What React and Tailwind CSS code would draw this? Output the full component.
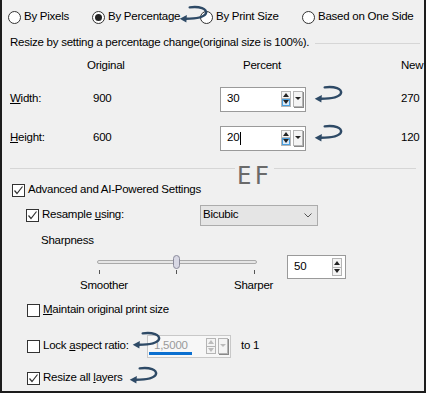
import React from "react";

const font = { fontFamily: '"Liberation Sans", Arial, sans-serif' };

const Arrow = ({ className }) => (
  <svg className={className} viewBox="0 0 30 20" width="29" height="19">
    <path d="M11 2.5 C21 1 30 4 28 9 C26 13 17 14.5 7 14.5" fill="none" stroke="#2e4a66" strokeWidth="2.6" strokeLinecap="round" />
    <path d="M0.5 14.5 L8 10.5 L7.5 18.5 Z" fill="#2e4a66" />
  </svg>
);

const Radio = ({ checked, label, className }) => (
  <div className={"flex items-center gap-[3px] " + (className || "")}>
    <span className="w-[13px] h-[13px] rounded-full border border-[#333] bg-white flex items-center justify-center">
      {checked && <span className="w-[7px] h-[7px] rounded-full bg-[#222]" />}
    </span>
    <span>{label}</span>
  </div>
);

const Check = ({ checked }) => (
  <span className="w-[13px] h-[13px] border border-[#333] bg-white flex items-center justify-center shrink-0">
    {checked && (
      <svg width="11" height="11" viewBox="0 0 11 11">
        <path d="M1.5 5.5 L4 8.5 L9.5 1.5" fill="none" stroke="#333" strokeWidth="1.2" />
      </svg>
    )}
  </span>
);

const SpinPair = ({ disabled, tall }) => (
  <div className={"flex flex-col w-[10px] border border-[#b5b5b5] bg-[#f4f4f4] " + (tall ? "h-[18px]" : "h-[16px]")}>
    <div className="flex-1 flex items-center justify-center border-b border-[#b5b5b5]">
      <span className={"w-0 h-0 border-l-[3px] border-r-[3px] border-b-[4px] border-l-transparent border-r-transparent " + (disabled ? "border-b-[#bbb]" : "border-b-[#222]")} />
    </div>
    <div className={"flex-1 flex items-center justify-center " + (disabled || tall ? "" : "bg-[#dbeaf8] border border-[#4aa0e0]")}>
      <span className={"w-0 h-0 border-l-[3px] border-r-[3px] border-t-[4px] border-l-transparent border-r-transparent " + (disabled ? "border-t-[#bbb]" : "border-t-[#222]")} />
    </div>
  </div>
);

const DropBtn = ({ disabled }) => (
  <div className="w-[10px] h-[16px] border border-[#b5b5b5] bg-[#f4f4f4] shadow-[1px_1px_0_#888] flex items-start justify-center pt-[5px] ml-[2px]">
    <span className={"w-0 h-0 border-l-[3px] border-r-[3px] border-t-[3px] border-l-transparent border-r-transparent " + (disabled ? "border-t-[#bbb]" : "border-t-[#222]")} />
  </div>
);

const NumBox = ({ value, caret }) => (
  <div className="w-[86px] h-[25px] border border-[#9a9a9a] bg-white flex items-center pl-[6px] pr-[2px]">
    <span className="flex-1 flex items-center">
      {value}
      {caret && <span className="w-[1px] h-[13px] bg-black ml-[1px]" />}
    </span>
    <SpinPair />
    <DropBtn />
  </div>
);

export default function App() {
  return (
    <div style={font} className="relative w-[426px] h-[393px] bg-[#f0f0f0] border-l-[2px] border-r-[2px] border-b-[2px] border-[#1c1c1c] text-[11.5px] tracking-[-0.25px] text-black overflow-hidden leading-none">
      {/* mode radios */}
      <div className="h-[34px] flex items-center">
        <Radio label="By Pixels" className="ml-[6px] w-[84px]" />
        <Radio checked label="By Percentage" className="w-[108px]" />
        <Radio label="By Print Size" className="w-[102px]" />
        <Radio label="Based on One Side" />
      </div>
      <Arrow className="absolute left-[177px] top-[5px]" />

      <div className="h-[18px] flex items-center pl-[8px] pr-[4px] gap-[6px]">
        <span className="whitespace-nowrap">Resize by setting a percentage change(original size is 100%).</span>
        <span className="flex-1 h-[1px] bg-[#d6d6d6]" />
      </div>

      {/* table */}
      <div className="h-[28px] flex items-center">
        <span className="ml-[85px] w-[156px]">Original</span>
        <span className="w-[158px]">Percent</span>
        <span>New</span>
      </div>
      <div className="h-[38px] flex items-center">
        <span className="ml-[8px] w-[83px]"><u>W</u>idth:</span>
        <span className="w-[127px]">900</span>
        <NumBox value="30" />
        <span className="ml-[95px]">270</span>
      </div>
      <Arrow className="absolute left-[312px] top-[85px]" />
      <div className="h-[40px] flex items-center">
        <span className="ml-[8px] w-[83px]"><u>H</u>eight:</span>
        <span className="w-[127px]">600</span>
        <NumBox value="20" caret />
        <span className="ml-[95px]">120</span>
      </div>
      <Arrow className="absolute left-[312px] top-[124px]" />

      {/* separator */}
      <div className="h-[20px] flex items-center px-[8px]">
        <span className="flex-1 h-[1px] bg-[#d6d6d6]" />
      </div>
      <span
        className="absolute left-[233px] top-[164px] px-[2px] bg-[#f0f0f0] text-[24px] text-[#6a6a6a] tracking-[3px] leading-none"
        style={{ fontFamily: '"DejaVu Sans Mono", monospace' }}
      >
        EF
      </span>

      <div className="h-[24px] flex items-center gap-[3px] pl-[10px]">
        <Check checked />
        <span>Advanced and AI-Powered Settings</span>
      </div>
      <div className="h-[26px] flex items-center pl-[24px]">
        <div className="flex items-center gap-[3px] w-[174px]">
          <Check checked />
          <span>Resample <u>u</u>sing:</span>
        </div>
        <div className="w-[118px] h-[21px] border border-[#acacac] bg-[#e5e5e5] flex items-center justify-between pl-[2px] pr-[5px]">
          <span>Bicubic</span>
          <svg width="8" height="5" viewBox="0 0 8 5"><path d="M0.5 0.5 L4 4 L7.5 0.5" fill="none" stroke="#555" /></svg>
        </div>
      </div>
      <div className="h-[26px] flex items-center pl-[39px]">Sharpness</div>

      {/* slider */}
      <div className="h-[26px] flex items-start">
        <div className="ml-[95px] w-[160px] relative h-[26px]">
          <div className="absolute left-0 right-0 top-[6px] h-[4px] rounded-full border border-[#a9a9a9] bg-[#e6e6e6]" />
          <div className="absolute left-[76px] top-[1px] w-[7px] h-[14px] rounded-full border border-[#8a8a9a] bg-[#d8d8e4]" />
          <div className="absolute left-[2px] top-[16px] w-[1px] h-[4px] bg-[#555]" />
          <div className="absolute left-[79px] top-[16px] w-[1px] h-[4px] bg-[#555]" />
          <div className="absolute left-[157px] top-[16px] w-[1px] h-[4px] bg-[#555]" />
        </div>
        <div className="ml-[30px] mt-[1px] w-[59px] h-[24px] border border-[#9a9a9a] bg-white flex items-center pl-[6px] pr-[3px]">
          <span className="flex-1">50</span>
          <SpinPair tall />
        </div>
      </div>
      <div className="h-[12px] flex items-center">
        <span className="ml-[78px] w-[154px]">Smoother</span>
        <span>Sharper</span>
      </div>

      <div className="h-[36px] flex items-center gap-[3px] pl-[25px]">
        <Check />
        <span><u>M</u>aintain original print size</span>
      </div>

      <div className="h-[36px] flex items-center pl-[25px]">
        <div className="flex items-center gap-[3px] w-[120px]">
          <Check />
          <span>Lock <u>a</u>spect ratio:</span>
        </div>
        <div className="w-[84px] h-[23px] border border-[#c8c8c8] bg-[#f7f7f7] flex items-center pl-[6px] pr-[2px] relative">
          <span className="flex-1 text-[#9a9a9a]">1,5000</span>
          <SpinPair disabled />
          <DropBtn disabled />
          <span className="absolute left-[1px] bottom-[2px] w-[43px] h-[3px] bg-[#0a6fd0]" />
        </div>
        <span className="ml-[10px]">to 1</span>
      </div>
      <Arrow className="absolute left-[130px] top-[331px]" />

      <div className="h-[28px] flex items-center gap-[3px] pl-[25px]">
        <Check checked />
        <span>Resize all <u>l</u>ayers</span>
      </div>
      <Arrow className="absolute left-[127px] top-[366px]" />
    </div>
  );
}
